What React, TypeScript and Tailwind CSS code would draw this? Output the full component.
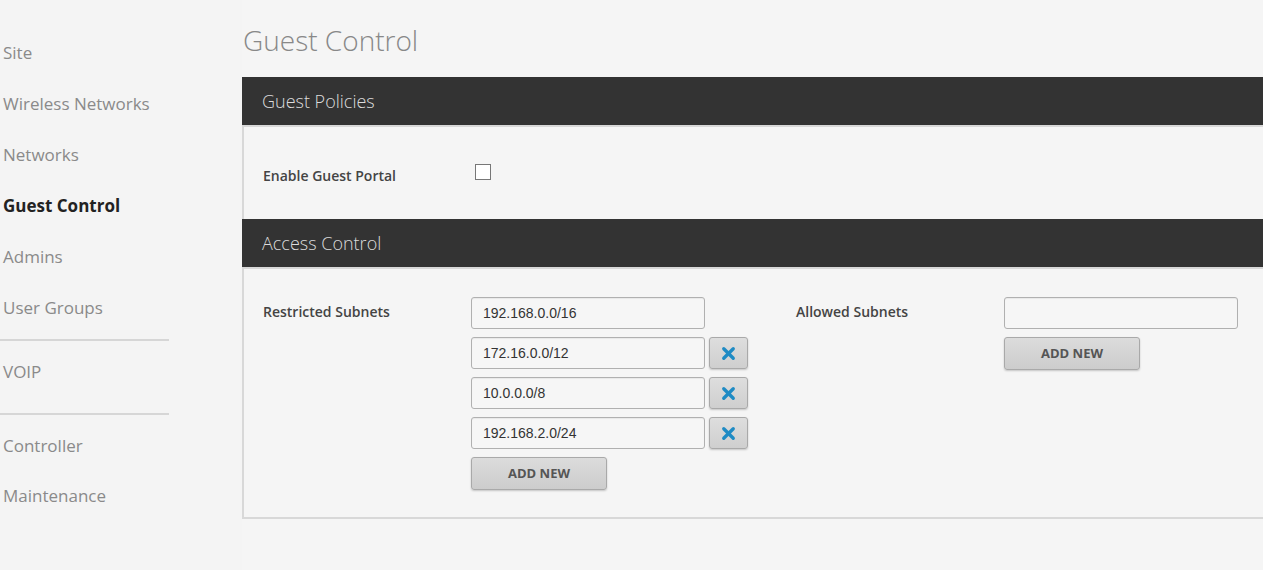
import { X } from "lucide-react";

const navTop = ["Site", "Wireless Networks", "Networks", "Guest Control", "Admins", "User Groups"];

function NavItem({ label, h = "h-[51px]" }: { label: string; h?: string }) {
  const active = label === "Guest Control";
  return (
    <div
      className={`${h} flex items-center pl-[3px] text-[17px] ${
        active ? "font-bold text-[#222]" : "text-[#8a8a8a]"
      }`}
    >
      {label}
    </div>
  );
}

function SubnetInput({ value }: { value: string }) {
  return (
    <div className="w-[234px] h-[32px] flex items-center px-[11px] bg-[#f6f6f6] border border-[#b0b0b0] rounded-[3px] shadow-[inset_0_1px_1px_rgba(0,0,0,0.06)] text-[14px] text-[#333] font-['Liberation_Sans',Arial,sans-serif]">
      {value}
    </div>
  );
}

function RemoveButton() {
  return (
    <button className="w-[39px] h-[32px] flex items-center justify-center bg-gradient-to-b from-[#dedede] to-[#cfcfcf] border border-[#a9a9a9] rounded-[3px] shadow-[0_1px_2px_rgba(0,0,0,0.2)]">
      <X size={19} strokeWidth={4.2} className="text-[#1f8bc4]" />
    </button>
  );
}

function AddNew() {
  return (
    <button className="w-[136px] h-[33px] bg-gradient-to-b from-[#dcdcdc] to-[#cccccc] border border-[#a9a9a9] rounded-[3px] shadow-[0_1px_2px_rgba(0,0,0,0.2)] text-[13px] font-bold text-[#555]">
      ADD NEW
    </button>
  );
}

export default function App() {
  const restricted = ["192.168.0.0/16", "172.16.0.0/12", "10.0.0.0/8", "192.168.2.0/24"];

  return (
    <div className="min-h-[570px] flex bg-[#f4f4f4] font-['Open_Sans',sans-serif] overflow-hidden">
      {/* Sidebar */}
      <div className="w-[242px] shrink-0 pt-[27px]">
        {navTop.map((l) => (
          <NavItem key={l} label={l} />
        ))}
        <div className="w-[169px] h-[2px] bg-[#d6d6d6] mt-[6px]" />
        <div className="h-[72px] flex items-center pl-[3px] pb-[10px] text-[17px] text-[#8a8a8a]">VOIP</div>
        <div className="w-[169px] h-[2px] bg-[#d6d6d6]" />
        <div className="pt-[6px]">
          <NavItem label="Controller" h="h-[50px]" />
          <NavItem label="Maintenance" h="h-[50px]" />
        </div>
      </div>

      {/* Main */}
      <div className="flex-1 min-w-0 bg-[#f5f5f5]">
        <h1 className="h-[77px] pt-[20px] pl-[1px] text-[28px] font-light text-[#888] leading-[40px]">
          Guest Control
        </h1>

        <div className="h-[48px] bg-[#333333] flex items-center pl-[20px] text-[18px] text-[#dcdcdc] font-light">
          Guest Policies
        </div>
        <div className="h-[94px] border-l-2 border-t-2 border-[#d8d8d8] flex items-center pl-[19px]">
          <div className="w-[212px] text-[14px] font-semibold text-[#444] pt-[4px]">Enable Guest Portal</div>
          <div className="w-[16px] h-[16px] bg-white border border-[#777] -mt-[2px]" />
        </div>

        <div className="h-[48px] bg-[#333333] flex items-center pl-[20px] text-[18px] text-[#dcdcdc] font-light">
          Access Control
        </div>
        <div className="h-[252px] border-l-2 border-t-2 border-b-2 border-[#d8d8d8] pt-[28px] pl-[19px] flex">
          <div className="w-[533px] flex">
            <div className="w-[208px] text-[14px] font-semibold text-[#444] pt-[4px]">Restricted Subnets</div>
            <div className="flex flex-col gap-[8px]">
              {restricted.map((s, i) => (
                <div key={s} className="flex gap-[4px]">
                  <SubnetInput value={s} />
                  {i > 0 && <RemoveButton />}
                </div>
              ))}
              <AddNew />
            </div>
          </div>
          <div className="flex">
            <div className="w-[208px] text-[14px] font-semibold text-[#444] pt-[4px]">Allowed Subnets</div>
            <div className="flex flex-col gap-[8px]">
              <SubnetInput value="" />
              <AddNew />
            </div>
          </div>
        </div>
      </div>
    </div>
  );
}
